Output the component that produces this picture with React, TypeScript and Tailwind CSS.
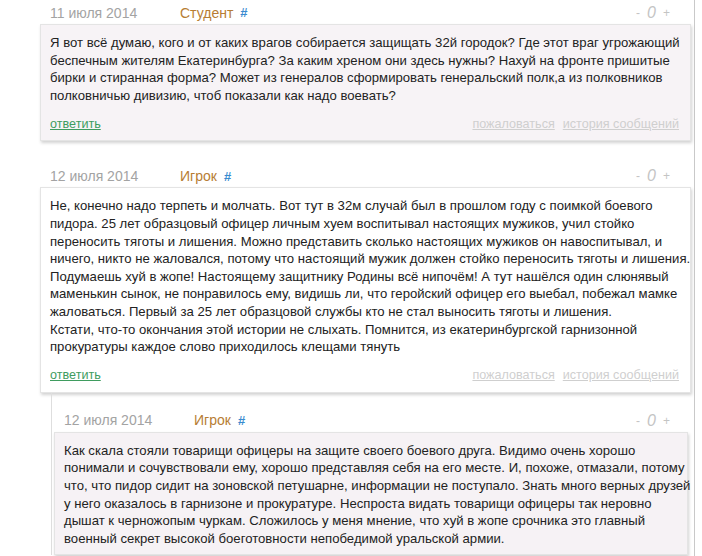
type Comment = {
  date: string;
  author: string;
  lines: string[];
  bg: string;
};

const first: Comment = {
  date: "11 июля 2014",
  author: "Студент",
  bg: "bg-[#f7f3f6]",
  lines: [
    "Я вот всё думаю, кого и от каких врагов собирается защищать 32й городок? Где этот враг угрожающий",
    "беспечным жителям Екатеринбурга? За каким хреном они здесь нужны? Нахуй на фронте пришитые",
    "бирки и стиранная форма? Может из генералов сформировать генеральский полк,а из полковников",
    "полковничью дивизию, чтоб показали как надо воевать?",
  ],
};

const second: Comment = {
  date: "12 июля 2014",
  author: "Игрок",
  bg: "bg-white",
  lines: [
    "Не, конечно надо терпеть и молчать. Вот тут в 32м случай был в прошлом году с поимкой боевого",
    "пидора. 25 лет образцовый офицер личным хуем воспитывал настоящих мужиков, учил стойко",
    "переносить тяготы и лишения. Можно представить сколько настоящих мужиков он навоспитывал, и",
    "ничего, никто не жаловался, потому что настоящий мужик должен стойко переносить тяготы и лишения.",
    "Подумаешь хуй в жопе! Настоящему защитнику Родины всё нипочём! А тут нашёлся один слюнявый",
    "маменькин сынок, не понравилось ему, видишь ли, что геройский офицер его выебал, побежал мамке",
    "жаловаться. Первый за 25 лет образцовой службы кто не стал выносить тяготы и лишения.",
    "Кстати, что-то окончания этой истории не слыхать. Помнится, из екатеринбургской гарнизонной",
    "прокуратуры каждое слово приходилось клещами тянуть",
  ],
};

const third: Comment = {
  date: "12 июля 2014",
  author: "Игрок",
  bg: "bg-[#f6f2f5]",
  lines: [
    "Как скала стояли товарищи офицеры на защите своего боевого друга. Видимо очень хорошо",
    "понимали и сочувствовали ему, хорошо представляя себя на его месте. И, похоже, отмазали, потому",
    "что, что пидор сидит на зоновской петушарне, информации не поступало. Знать много верных друзей",
    "у него оказалось в гарнизоне и прокуратуре. Неспроста видать товарищи офицеры так неровно",
    "дышат к черножопым чуркам. Сложилось у меня мнение, что хуй в жопе срочника это главный",
    "военный секрет высокой боеготовности непобедимой уральской армии.",
  ],
};

function Header({ c, pr }: { c: Comment; pr: string }) {
  return (
    <div className={`flex h-[22px] items-center text-[14px] ${pr}`}>
      <span className="w-[140px] pl-[10px] text-[#a3a3a3]">{c.date}</span>
      <span className="text-[#b77d33]">{c.author}</span>
      <span className="ml-[7px] text-[13px] font-bold text-[#3a8bcf]">#</span>
      <span className="ml-auto flex items-center gap-[7px] text-[#c4c4c4]">
        <span className="text-[12px]">-</span>
        <span className="text-[16px] italic">0</span>
        <span className="text-[12px]">+</span>
      </span>
    </div>
  );
}

function Card({ c, withFooter = true }: { c: Comment; withFooter?: boolean }) {
  return (
    <div
      className={`border border-[#e4e4e4] ${c.bg} px-[9px] pt-[9px] pb-[7px] shadow-[1px_2px_3px_rgba(0,0,0,0.18)]`}
    >
      <p className="whitespace-nowrap text-[13.15px] leading-[17.6px] text-[#222]">
        {c.lines.map((l, i) => (
          <span key={i}>
            {l}
            <br />
          </span>
        ))}
      </p>
      {withFooter && (
        <div className="mt-[11px] flex h-[18px] items-center text-[12.6px]">
          <a className="text-[#3f9c5f] underline">ответить</a>
          <a className="ml-auto text-[#cfcfcf] underline">пожаловаться</a>
          <a className="ml-[8px] mr-[2px] text-[#cfcfcf] underline">история сообщений</a>
        </div>
      )}
    </div>
  );
}

export default function App() {
  return (
    <div
      className="h-[556px] w-[702px] overflow-hidden bg-white"
      style={{ fontFamily: '"Liberation Sans", Arial, sans-serif' }}
    >
      <div className="h-full w-[695px] border-r border-[#c9c9c9] pt-[2px] pl-[40px] pr-[3px]">
        <Header c={first} pr="pr-[21px]" />
        <Card c={first} />

        <div className="mt-[24px]">
          <Header c={second} pr="pr-[21px]" />
          <Card c={second} />
        </div>

        <div className="ml-[11px] mr-[3px] border-l border-[#dedede] pl-[2px] pt-[17px]">
          <Header c={third} pr="pr-[18px]" />
          <Card c={third} withFooter={false} />
        </div>
      </div>
    </div>
  );
}
